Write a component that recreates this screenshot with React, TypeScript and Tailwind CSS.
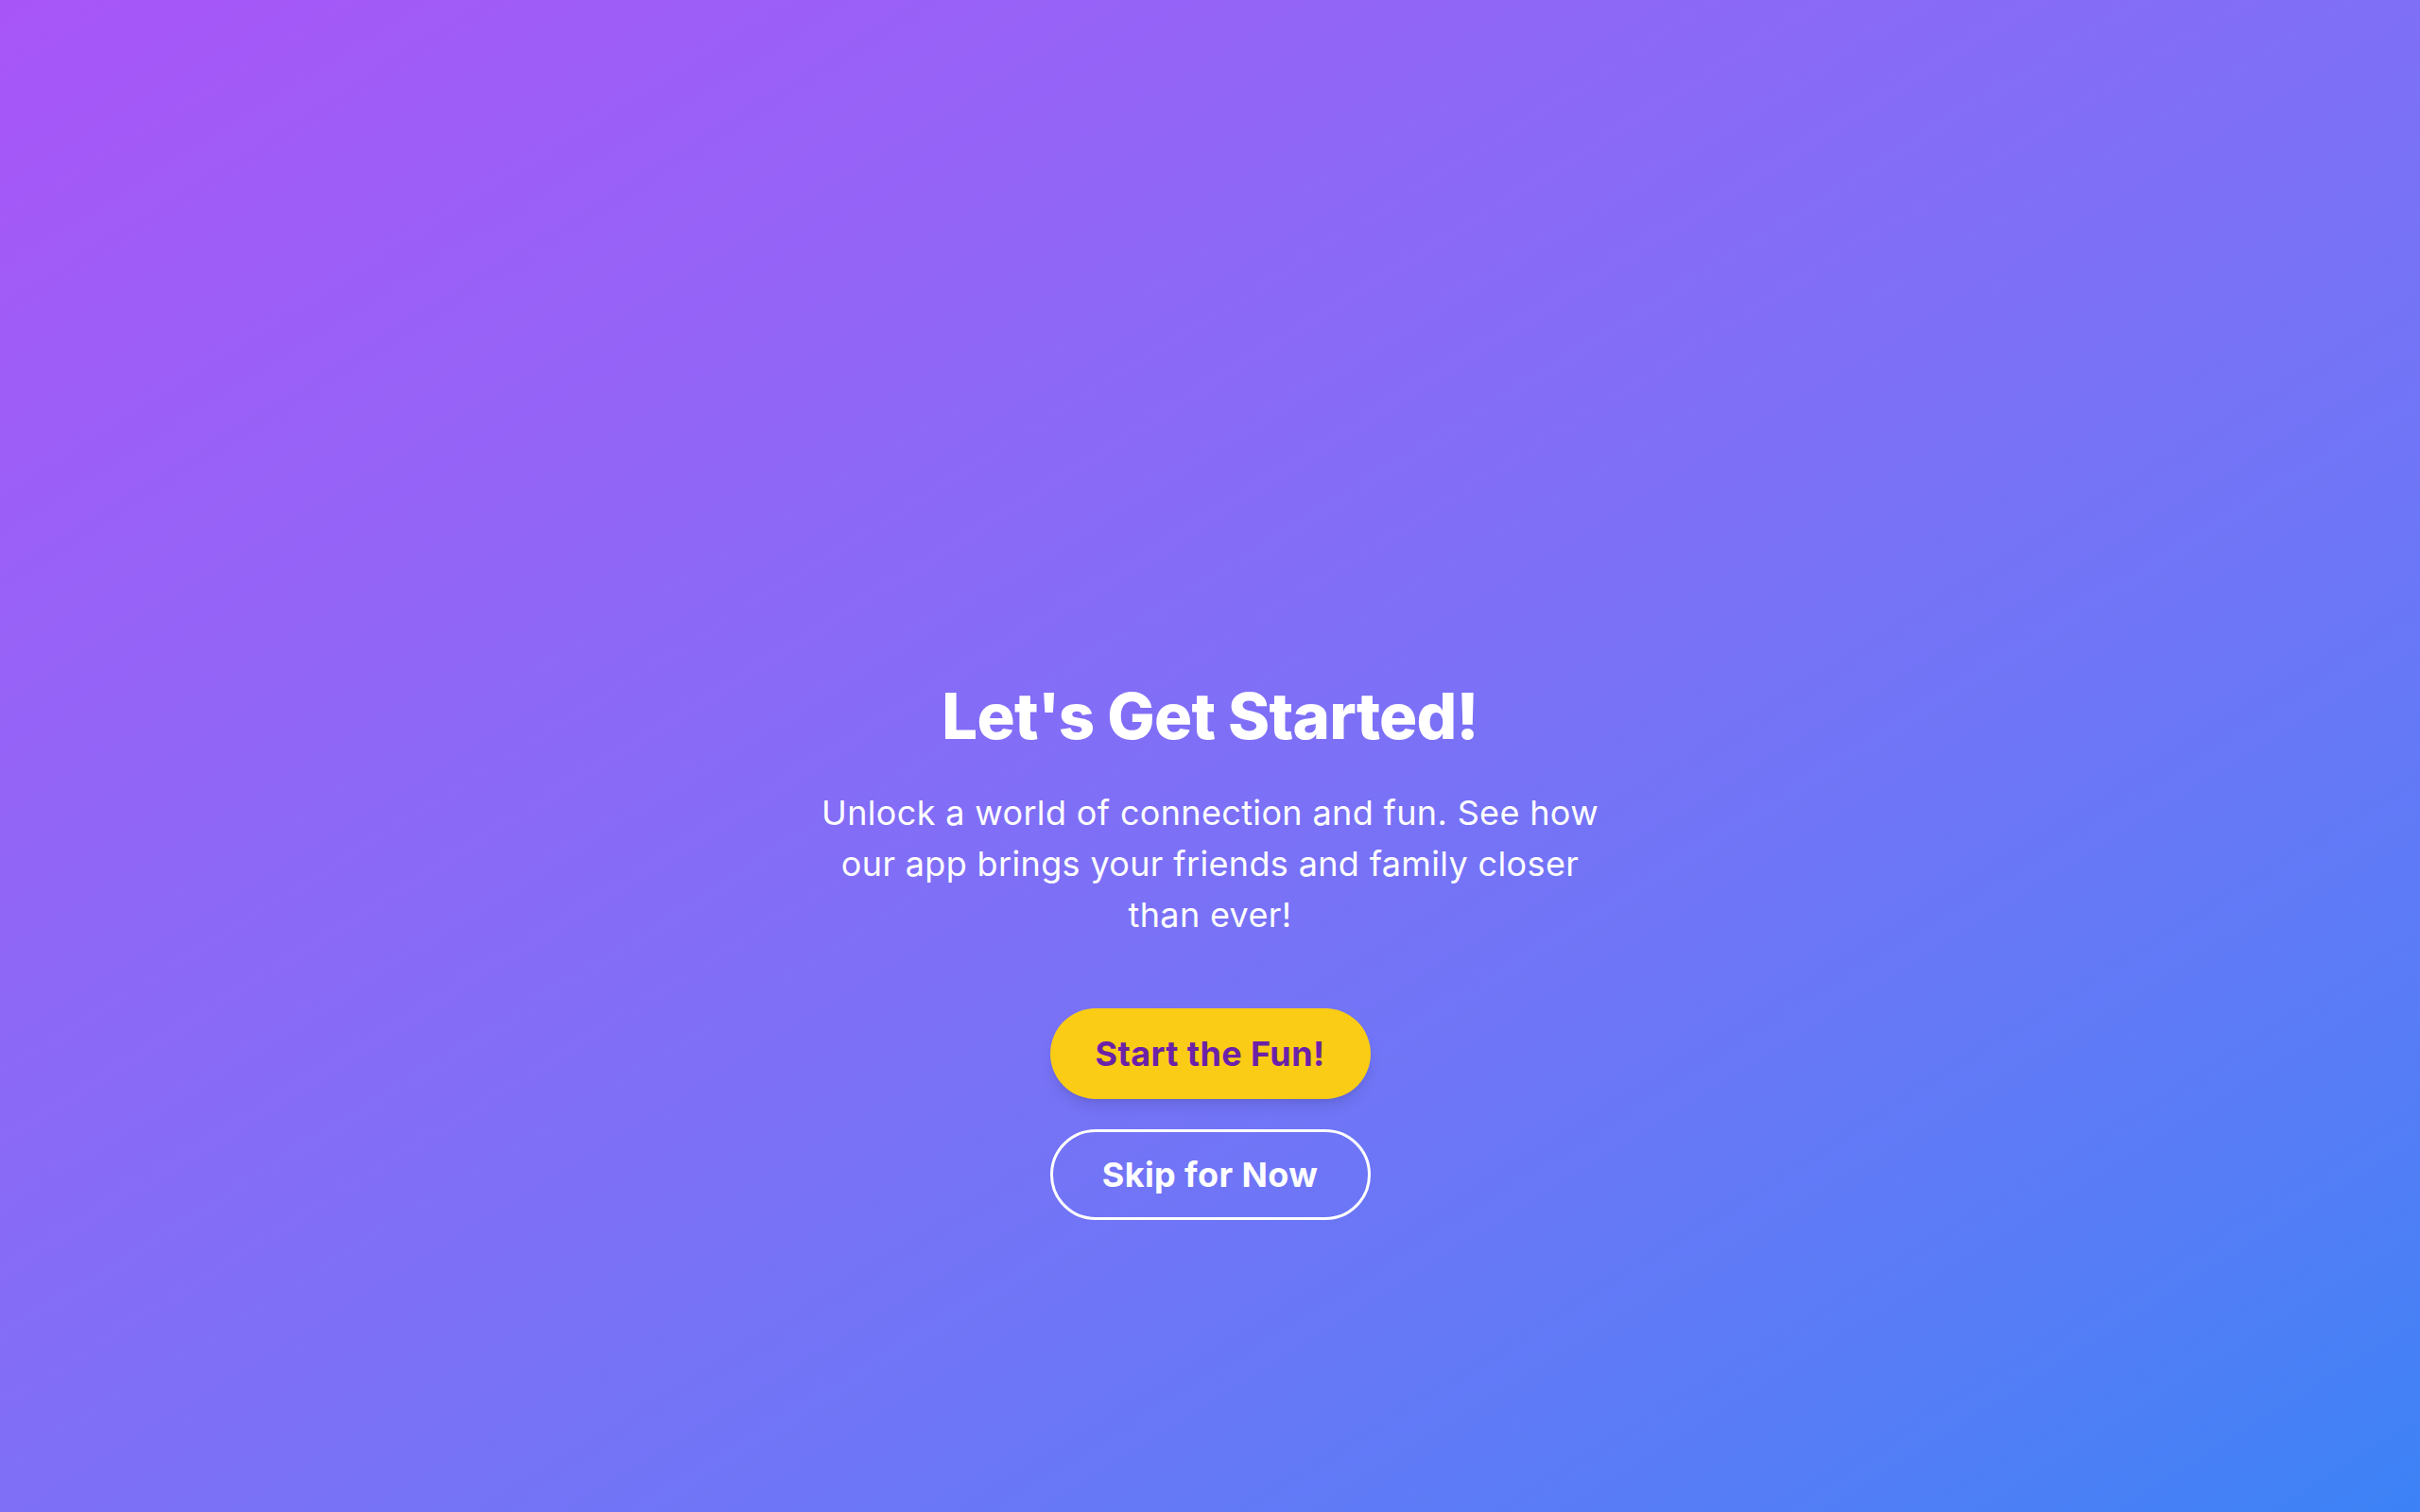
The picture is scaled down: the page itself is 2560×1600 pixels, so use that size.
import React from "react";

export default function App() {
  return (
    <div
      className="min-h-screen w-full bg-gradient-to-br from-[#a855f7] to-[#3b82f6] flex flex-col items-center"
      style={{ fontFamily: "Inter, 'Noto Sans', sans-serif" }}
    >
      <div className="h-[718px] shrink-0" />
      <h1 className="text-[67px] leading-[1.2] font-extrabold text-white tracking-[-0.8px] text-center">
        Let's Get Started!
      </h1>
      <p className="mt-[35px] w-[850px] text-center text-white text-[36px] leading-[54px] font-normal tracking-[0.35px]">
        Unlock a world of connection and fun. See how our app brings your friends and family closer than ever!
      </p>
      <div className="mt-[72px] flex flex-col items-center gap-[32px]">
        <button className="w-[339px] h-[96px] rounded-full bg-[#facc15] text-[#6b21a8] text-[36px] font-bold tracking-[0.4px] shadow-lg">
          Start the Fun!
        </button>
        <button className="w-[339px] h-[96px] rounded-full border-[3px] border-white text-white text-[36px] font-bold tracking-[0.4px]">
          Skip for Now
        </button>
      </div>
    </div>
  );
}
